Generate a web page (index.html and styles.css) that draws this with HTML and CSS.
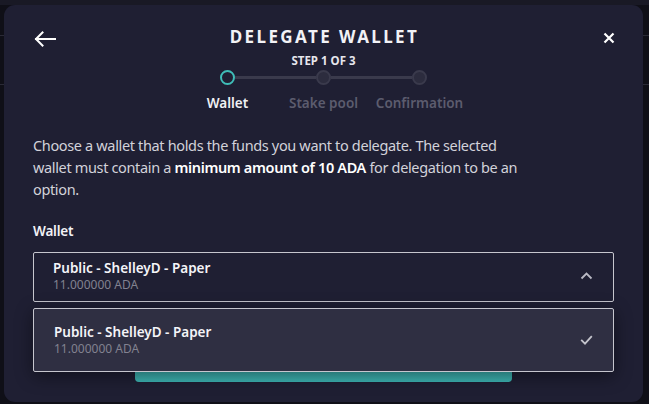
FILE: index.html
```html
<!DOCTYPE html>
<html>
<head>
<meta charset="utf-8">
<link rel="stylesheet" href="styles.css">
</head>
<body>
<div class="page">
  <div class="page-top"></div>
  <div class="page-row"></div>
  <div class="page-row second"></div>
</div>
<div class="modal">
  <div class="header">
    <button class="icon-btn back" aria-label="Back">
      <svg width="22" height="16" viewBox="0 0 22 16"><path d="M21 8H2M8.5 1.5L2 8l6.5 6.5" fill="none" stroke="#fff" stroke-width="2" stroke-linecap="square"/></svg>
    </button>
    <div class="titles">
      <h1 class="title">DELEGATE WALLET</h1>
      <div class="step-count">STEP 1 OF 3</div>
    </div>
    <button class="icon-btn close" aria-label="Close">
      <svg width="12" height="12" viewBox="0 0 12 12"><path d="M1.5 1.5l9 9M10.5 1.5l-9 9" fill="none" stroke="#fff" stroke-width="2.2"/></svg>
    </button>
  </div>
  <div class="stepper">
    <div class="dots">
      <span class="dot active"></span>
      <span class="track"></span>
      <span class="dot"></span>
      <span class="track"></span>
      <span class="dot"></span>
    </div>
    <div class="labels">
      <span class="label active">Wallet</span>
      <span class="label">Stake pool</span>
      <span class="label">Confirmation</span>
    </div>
  </div>
  <div class="content">
    <p class="intro">Choose a wallet that holds the funds you want to delegate. The selected wallet must contain a <strong>minimum amount of 10 ADA</strong> for delegation to be an option.</p>
    <div class="field-label">Wallet</div>
    <div class="select">
      <div class="option-text">
        <div class="wallet-name">Public - ShelleyD - Paper</div>
        <div class="wallet-amount">11.000000 ADA</div>
      </div>
      <svg class="chev" width="13" height="8" viewBox="0 0 13 8"><path d="M1.5 6.5l5-5 5 5" fill="none" stroke="#b9b9c4" stroke-width="1.8"/></svg>
      <div class="dropdown">
        <div class="option-text">
          <div class="wallet-name">Public - ShelleyD - Paper</div>
          <div class="wallet-amount">11.000000 ADA</div>
        </div>
        <svg class="check" width="13" height="10" viewBox="0 0 13 10"><path d="M1.2 4.8l3.8 3.8 6.8-7.4" fill="none" stroke="#c4c4cc" stroke-width="1.8"/></svg>
      </div>
    </div>
    <div class="btn-row">
      <button class="continue">Continue</button>
    </div>
  </div>
</div>
</body>
</html>
```
FILE: styles.css
```css
* { box-sizing: border-box; }
html, body { margin: 0; padding: 0; }
body {
  width: 649px;
  height: 404px;
  overflow: hidden;
  background: #0f0f17;
  font-family: "Noto Sans", "Open Sans", sans-serif;
  position: relative;
}
.page-top { height: 5px; background: #191925; }
.page-row { height: 31px; border-bottom: 1px solid #2a2a36; }
.page-row.second { height: 49px; }

.modal {
  position: absolute;
  left: 4px;
  top: 5px;
  width: 639px;
  height: 397px;
  background: #1f1f33;
  border-radius: 11px;
  padding: 20px 29px 0;
  color: #fff;
}
.header {
  display: grid;
  grid-template-columns: 40px 1fr 40px;
  align-items: start;
}
.icon-btn {
  background: none;
  border: 0;
  padding: 0;
  display: flex;
  cursor: pointer;
}
.back { margin-top: 6px; margin-left: 1px; }
.close { justify-self: end; margin-top: 7px; margin-right: -1px; }
.titles { text-align: center; }
.title {
  margin: 0;
  font-size: 17px;
  line-height: 24px;
  font-weight: 700;
  letter-spacing: 2.4px;
  color: #f2f2f6;
  padding-left: 2px;
}
.step-count {
  margin-top: 4px;
  font-size: 11.5px;
  line-height: 15px;
  font-weight: 700;
  color: #e6e6ec;
}
.stepper {
  display: flex;
  flex-direction: column;
  align-items: center;
  margin-top: 2px;
}
.dots { display: flex; align-items: center; }
.dot {
  width: 15px;
  height: 15px;
  border-radius: 50%;
  background: #2c2c3e;
  border: 2px solid #3a3a4c;
}
.dot.active { background: #1f1f33; border-color: #3fbdb8; }
.track { width: 81px; height: 3px; background: #3a3a4c; }
.labels {
  display: grid;
  grid-template-columns: 96px 96px 96px;
  margin-top: 9px;
}
.label {
  text-align: center;
  font-size: 13.5px;
  line-height: 18px;
  font-weight: 600;
  color: #5c5c6e;
  white-space: nowrap;
}
.label.active { color: #f0f0f4; }

.content { margin-top: 22px; }
.intro {
  margin: 0;
  max-width: 505px;
  font-size: 14.5px;
  letter-spacing: -0.35px;
  line-height: 22px;
  color: #d2d2da;
}
.intro strong { color: #fff; font-weight: 600; }
.field-label {
  margin-top: 21px;
  font-size: 13.5px;
  letter-spacing: -0.2px;
  line-height: 20px;
  font-weight: 600;
  color: #f2f2f6;
}
.select {
  position: relative;
  margin-top: 11px;
  height: 50px;
  border: 1px solid #c6c6ce;
  border-radius: 2px;
  display: flex;
  align-items: center;
  justify-content: space-between;
  padding: 0 20px 0 19px;
}
.wallet-name {
  font-size: 13.5px;
  line-height: 17px;
  font-weight: 600;
  color: #f4f4f8;
}
.wallet-amount {
  font-size: 12px;
  line-height: 15px;
  color: #828290;
}
.option-text { margin-top: -2px; }
.chev { margin-top: -2px; }
.dropdown {
  position: absolute;
  left: -1px;
  right: -1px;
  top: 55px;
  height: 64px;
  background: #2f2f42;
  border: 1px solid #c6c6ce;
  border-radius: 2px;
  box-shadow: 0 4px 18px rgba(0, 0, 0, 0.45);
  display: flex;
  align-items: center;
  justify-content: space-between;
  padding: 0 20px 0 20px;
  z-index: 2;
}
.dropdown .option-text { margin-top: 0; }
.btn-row { display: flex; justify-content: center; margin-top: 40px; }
.continue {
  width: 377px;
  height: 40px;
  border: 0;
  border-radius: 4px;
  background: linear-gradient(180deg, #3aa3a3, #3db4b2);
  color: #fff;
  font-family: inherit;
  font-size: 14px;
}
```
